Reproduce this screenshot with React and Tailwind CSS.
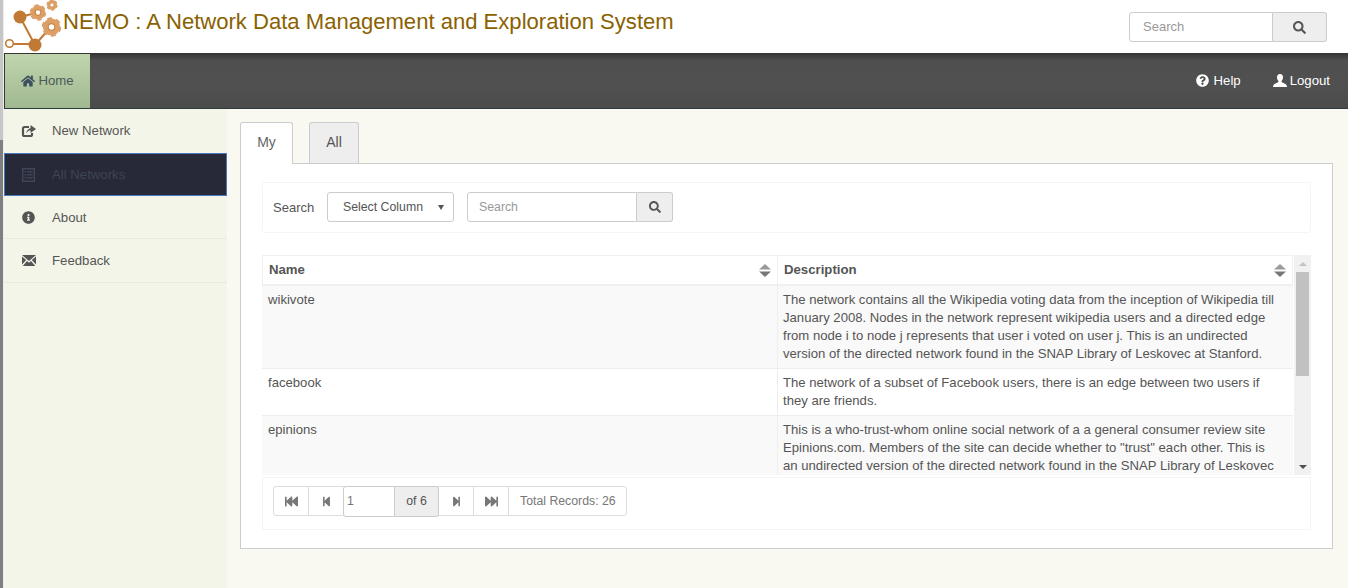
import React from 'react';
import {
  FaHome, FaQuestionCircle, FaSearch, FaInfoCircle,
  FaStepBackward, FaStepForward, FaFastBackward, FaFastForward,
} from 'react-icons/fa';

const Envelope = () => (
  <svg width="14" height="11" viewBox="0 0 14 11" fill="currentColor">
    <path d="M0 0h14L7 6z" />
    <path d="M0 1.5v8L4.2 5zM14 1.5v8L9.8 5zM0.8 11h12.4L9 6 7 7.8 5 6z" />
  </svg>
);

const ShareIcon = () => (
  <svg width="15" height="14" viewBox="0 0 15 14" className="-ml-px">
    <path d="M8 3H3.5A1.5 1.5 0 0 0 2 4.5v6A1.5 1.5 0 0 0 3.5 12h6a1.5 1.5 0 0 0 1.5-1.5V9" fill="none" stroke="currentColor" strokeWidth="2.2" />
    <path d="M5 9.5C5.5 6.5 7.5 4.5 9.5 4.2V1L15 5l-5.5 4V6.2C7.8 6.4 6.2 7.6 5 9.5z" fill="currentColor" />
  </svg>
);

const ListIcon = () => (
  <svg width="13" height="14" viewBox="0 0 13 14" fill="currentColor">
    <path d="M0 0h13v14H0zM1.5 1.5v11h10v-11z" fillRule="evenodd" />
    <path d="M2.5 3h1.5v1.5H2.5zM5 3h5.5v1.5H5zM2.5 6h1.5v1.5H2.5zM5 6h5.5v1.5H5zM2.5 9h1.5v1.5H2.5zM5 9h5.5v1.5H5z" />
  </svg>
);

const UserIcon = () => (
  <svg width="14" height="13" viewBox="0 0 14 13" fill="currentColor">
    <path d="M7 0C5 0 4 1.5 4 3.2c0 1.5.6 2.8 1.4 3.6v1.3C4 9.2.8 9.8.3 11.5L0 13h14l-.3-1.5C13.2 9.8 10 9.2 8.6 8.1V6.800C9.4 6 10 4.7 10 3.2 10 1.5 9 0 7 0z" />
  </svg>
);

const SortIcon = () => (
  <svg width="12" height="13" viewBox="0 0 12 13">
    <path d="M6 0l6 5.5H0z" fill="#9a9a9a" />
    <path d="M6 13l6-5.5H0z" fill="#777" />
  </svg>
);

// small gear for the logo
const Gear = ({ cx, cy, r }) => (
  <g>
    <circle cx={cx} cy={cy} r={r * 0.65} fill="none" stroke="#dc9f66" strokeWidth={r * 0.5} />
    <circle cx={cx} cy={cy} r={r * 0.88} fill="none" stroke="#dc9f66" strokeWidth={r * 0.3} strokeDasharray={`${r * 0.5} ${r * 0.42}`} />
    <circle cx={cx} cy={cy} r={r * 0.36} fill="none" stroke="#c98440" strokeWidth={r * 0.14} />
  </g>
);

const Logo = () => (
  <svg width="60" height="53" viewBox="0 0 60 53" className="shrink-0">
    <g stroke="#c07a35" strokeWidth="2" fill="none">
      <line x1="16" y1="17" x2="32" y2="13" />
      <line x1="16" y1="17" x2="31" y2="45" />
      <line x1="31" y1="45" x2="44" y2="30" />
      <line x1="6" y1="44" x2="31" y2="44" />
    </g>
    <circle cx="16" cy="17" r="6.5" fill="#c07a35" />
    <circle cx="31" cy="45" r="6.5" fill="#c07a35" />
    <circle cx="5.5" cy="43.5" r="3.8" fill="#fff" stroke="#c07a35" strokeWidth="1.6" />
    <Gear cx={34} cy={12.5} r={8} />
    <Gear cx={48} cy={5} r={5.5} />
    <Gear cx={47.5} cy={27} r={9.5} />
  </svg>
);

const sideItems = [
  { label: 'New Network', icon: <ShareIcon />, cls: 'h-[44px]' },
  { label: 'All Networks', icon: <ListIcon />, active: true },
  { label: 'About', icon: <FaInfoCircle size={13} />, cls: 'h-[43px] pt-px border-b border-[#e9eadd]' },
  { label: 'Feedback', icon: <Envelope />, cls: 'h-[44px] border-b border-[#e9eadd]' },
];

const rows = [
  {
    name: 'wikivote',
    h: 'h-[83px]',
    bg: 'bg-[#f9f9f9]',
    lines: [
      'The network contains all the Wikipedia voting data from the inception of Wikipedia till',
      'January 2008. Nodes in the network represent wikipedia users and a directed edge',
      'from node i to node j represents that user i voted on user j. This is an undirected',
      'version of the directed network found in the SNAP Library of Leskovec at Stanford.',
    ],
  },
  {
    name: 'facebook',
    h: 'h-[47px]',
    bg: 'bg-white',
    lines: [
      'The network of a subset of Facebook users, there is an edge between two users if',
      'they are friends.',
    ],
  },
  {
    name: 'epinions',
    h: 'h-[84px]',
    bg: 'bg-[#f9f9f9]',
    lines: [
      'This is a who-trust-whom online social network of a a general consumer review site',
      'Epinions.com. Members of the site can decide whether to "trust" each other. This is',
      'an undirected version of the directed network found in the SNAP Library of Leskovec',
    ],
  },
];

const PagerBtn = ({ children }) => (
  <div className="w-[35px] h-full flex items-center justify-center border-r border-[#ddd] text-[#777]">{children}</div>
);

export default function App() {
  return (
    <div className="h-[588px] overflow-hidden flex bg-[#ececec] text-[#555] text-[13.2px] font-['Liberation_Sans',Arial,sans-serif]">
      {/* Window edge */}
      <div className="w-[3px] shrink-0 flex flex-col">
        <div className="h-[140px] bg-[#c6c6c6]" />
        <div className="flex-1 bg-[#7f7f7f]" />
      </div>

      <div className="flex-1 min-w-0 ml-px bg-[#f9f9f2] flex flex-col">
        {/* Header */}
        <div className="h-[53px] bg-white flex items-start shrink-0">
          <Logo />
          <h1 className="text-[22.07px] leading-[24px] mt-[10px] -ml-px text-[#8a6100] whitespace-nowrap">
            NEMO : A Network Data Management and Exploration System
          </h1>
          <div className="ml-auto mr-[21px] mt-3 flex h-[30px] w-[198px] text-[13px]">
            <div className="flex-1 bg-white border border-[#ccc] rounded-l-[3px] pl-[13px] flex items-center text-[#999]">Search</div>
            <div className="w-[54px] bg-[#eee] border border-l-0 border-[#ccc] rounded-r-[3px] flex items-center justify-center text-[#555]">
              <FaSearch size={13} />
            </div>
          </div>
        </div>

        {/* Navbar */}
        <div className="h-[56px] shrink-0 flex border-l border-b border-[#2f3b3b] bg-[linear-gradient(to_bottom,#333_0%,#4f4f4f_14%,#505050_60%,#4b4b4b_100%)]">
          <div className="w-[85px] mt-px flex items-center justify-center gap-[3px] bg-gradient-to-b from-[#c0d5ae] to-[#a0b890] text-[#4a5a5a]">
            <FaHome size={14} className="text-[#3d5060]" />
            Home
          </div>
          <div className="ml-auto flex items-center text-white">
            <div className="flex items-center gap-[5px] mr-[32px]">
              <FaQuestionCircle size={13} />
              Help
            </div>
            <div className="flex items-center gap-[3px] mr-[18px]">
              <UserIcon />
              Logout
            </div>
          </div>
        </div>

        <div className="flex flex-1 min-h-0">
          {/* Sidebar */}
          <div className="w-[223px] shrink-0 bg-[#f4f5e9]">
            {sideItems.map((item) => (
              <div
                key={item.label}
                className={
                  item.active
                    ? 'h-[43px] flex items-center bg-[#272838] border border-[#4a78c0] text-[#3e4555]'
                    : `flex items-center text-[#555] ${item.cls}`
                }
              >
                <div className={item.active ? 'w-[47px] pl-[17px]' : 'w-[48px] pl-[18px]'}>{item.icon}</div>
                {item.label}
              </div>
            ))}
          </div>

          {/* Main */}
          <div className="flex-1 min-w-0 pl-[13px] pr-[15px] pt-[13px]">
            <div className="flex h-[42px] text-[14px] relative z-10">
              <div className="w-[53px] h-[42px] pb-[2px] bg-white border border-b-0 border-[#ccc] rounded-t-[3px] flex items-center justify-center text-[#666]">My</div>
              <div className="w-[50px] h-[41px] pb-[1px] ml-4 bg-[#eee] border border-b-0 border-[#ccc] rounded-t-[3px] flex items-center justify-center text-[#555]">All</div>
            </div>
            <div className="-mt-px h-[386px] bg-white border border-[#ccc] pt-[18px] px-[21px]">
              {/* Filter bar */}
              <div className="h-[51px] border border-[#f5f5f5] rounded-[3px] flex items-center pl-[10px] text-[12.3px]">
                <span className="text-[13px] w-[54px]">Search</span>
                <div className="w-[127px] h-[30px] -mt-[2px] pt-px border border-[#ccc] rounded-[3px] flex items-center justify-between pl-[15px] pr-[9px] text-[#555]">
                  Select Column
                  <svg width="6" height="5" viewBox="0 0 6 5"><path d="M0 0h6L3 5z" fill="#555" /></svg>
                </div>
                <div className="ml-[13px] -mt-[2px] pt-px w-[170px] h-[30px] border border-[#ccc] rounded-l-[3px] flex items-center px-[11px] text-[#999]">Search</div>
                <div className="w-[36px] h-[30px] -mt-[2px] bg-[#eee] border border-l-0 border-[#ccc] rounded-r-[3px] flex items-center justify-center">
                  <FaSearch size={12} />
                </div>
              </div>

              {/* Table */}
              <div className="mt-[22px] h-[222px] pb-[2px] flex overflow-hidden">
                <div className="flex-1 min-w-0 overflow-hidden">
                  <div className="flex h-[31px] border border-[#f0f0f0] border-b-2 font-bold text-[#555]">
                    <div className="w-[515px] flex items-center justify-between px-[6px] border-r border-[#f0f0f0]">
                      Name
                      <SortIcon />
                    </div>
                    <div className="flex-1 flex items-center justify-between pl-[6px] pr-[6px]">
                      Description
                      <SortIcon />
                    </div>
                  </div>
                  {rows.map((row) => (
                    <div key={row.name} className={`flex ${row.h} ${row.bg} border-b border-[#eee] text-[13.14px] leading-[18px] overflow-hidden`}>
                      <div className="w-[516px] pl-[6px] pt-[5px] border-r border-[#eee]">{row.name}</div>
                      <div className="flex-1 pl-[5px] pt-[5px] whitespace-nowrap">
                        {row.lines.map((line) => (
                          <div key={line}>{line}</div>
                        ))}
                      </div>
                    </div>
                  ))}
                </div>
                {/* Scrollbar */}
                <div className="w-[17px] ml-px shrink-0 bg-[#f1f1f1] flex flex-col items-center">
                  <div className="h-[17px] flex items-center">
                    <svg width="8" height="4" viewBox="0 0 8 4"><path d="M4 0l4 4H0z" fill="#c4c4c4" /></svg>
                  </div>
                  <div className="w-[13px] h-[104px] bg-[#c1c1c1]" />
                  <div className="mt-auto h-[17px] flex items-center">
                    <svg width="8" height="4" viewBox="0 0 8 4"><path d="M4 4l4-4H0z" fill="#505050" /></svg>
                  </div>
                </div>
              </div>

              {/* Pager */}
              <div className="h-[53px] border border-[#f5f5f5] flex items-start pt-[8px] pl-[10px] text-[12.3px]">
                <div className="flex h-[30px] border border-[#ddd] rounded-[3px] items-start">
                  <PagerBtn><FaFastBackward size={13} /></PagerBtn>
                  <div className="w-[34px] h-full flex items-center justify-center text-[#777]"><FaStepBackward size={11} /></div>
                  <div className="w-[52px] h-[31px] -mt-px bg-white border border-[#ccc] rounded-l-[3px] flex items-center pl-[3px] text-[#777]">1</div>
                  <div className="w-[44px] h-[31px] -mt-px bg-[#eee] border border-l-0 border-[#ccc] rounded-r-[3px] flex items-center justify-center">of 6</div>
                  <PagerBtn><FaStepForward size={11} /></PagerBtn>
                  <PagerBtn><FaFastForward size={13} /></PagerBtn>
                  <div className="h-full flex items-center pl-[11px] pr-[10px] text-[#777]">Total Records: 26</div>
                </div>
              </div>
            </div>
          </div>
        </div>
      </div>
    </div>
  );
}
